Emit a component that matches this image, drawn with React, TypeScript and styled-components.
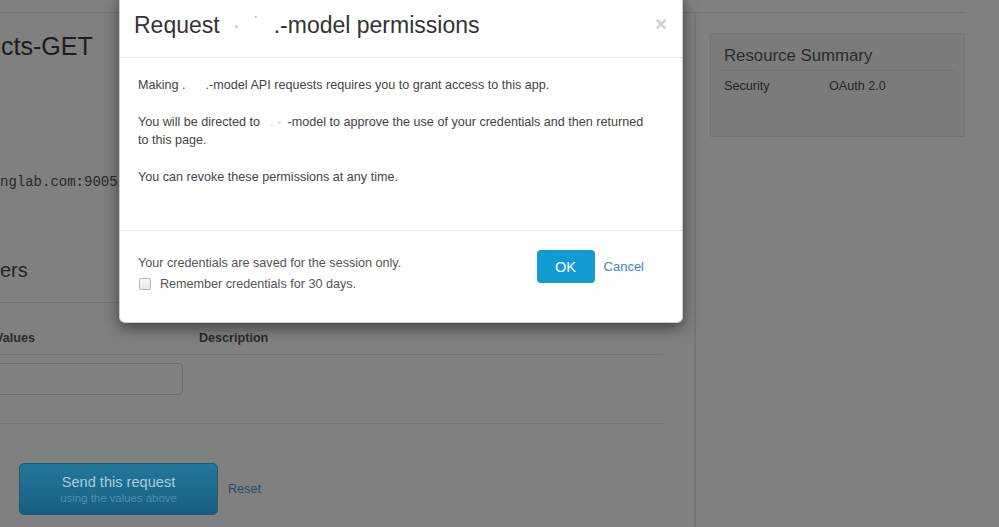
import React from "react";
import styled, { createGlobalStyle } from "styled-components";

const GlobalStyle = createGlobalStyle`
  html, body { margin: 0; padding: 0; }
  body {
    width: 999px;
    height: 527px;
    overflow: hidden;
    background: #808080;
    font-family: "Liberation Sans", Arial, sans-serif;
  }
  * { box-sizing: border-box; }
`;

const Page = styled.div`
  position: relative;
  width: 999px;
  height: 527px;
  overflow: hidden;
  background: #808080;
`;

const Layout = styled.div`
  width: 965px;
  height: 100%;
  display: flex;
  flex-direction: column;
`;

const TopBar = styled.div`
  flex: none;
  height: 13px;
  border-bottom: 1px solid #727272;
`;

const Columns = styled.div`
  flex: 1;
  display: grid;
  grid-template-columns: 696px 1fr;
`;

const Main = styled.main`
  border-right: 2px solid #767676;
  padding-right: 31px;
  display: flex;
  flex-direction: column;
`;

const PageTitle = styled.h1`
  margin: 18px 0 0 1px;
  font-size: 25px;
  line-height: 30px;
  font-weight: normal;
  color: #1c1c1c;
`;

const Url = styled.div`
  margin-top: 111px;
  font-family: "Liberation Mono", "Courier New", monospace;
  font-size: 14px;
  line-height: 20px;
  color: #2a2a2a;
  white-space: nowrap;
`;

const SectionHeading = styled.h2`
  margin: 66px 0 0;
  font-size: 20px;
  line-height: 24px;
  font-weight: normal;
  color: #262626;
`;

const Table = styled.div`
  margin-top: 20px;
  border-top: 1px solid #747474;
`;

const Row = styled.div<{ $head?: boolean }>`
  display: grid;
  grid-template-columns: 199px 1fr;
  align-items: ${(p) => (p.$head ? "end" : "start")};
  height: ${(p) => (p.$head ? "52px" : "69px")};
  padding: ${(p) => (p.$head ? "0 0 7px" : "8px 0 0")};
  border-bottom: 1px solid #747474;
`;

const HeadCell = styled.div<{ $shift?: number }>`
  margin-left: ${(p) => p.$shift ?? 0}px;
  font-size: 12.6px;
  line-height: 18px;
  font-weight: bold;
  color: #2a2a2a;
`;

const ValueInput = styled.input`
  margin-left: -8px;
  width: 191px;
  height: 32px;
  border: 1px solid #6c6c6c;
  border-radius: 4px;
  background: #808080;
  outline: none;
`;

const Actions = styled.div`
  margin: 39px 0 0 19px;
  display: flex;
  align-items: center;
  gap: 10px;
`;

const SendButton = styled.button`
  width: 199px;
  height: 52px;
  border: 1px solid #1b5c78;
  border-radius: 5px;
  background: linear-gradient(#23789c, #175e7e);
  display: flex;
  flex-direction: column;
  align-items: center;
  justify-content: center;
  padding: 0;
  font-family: "Liberation Sans", Arial, sans-serif;
  cursor: pointer;
`;

const SendLabel = styled.span`
  font-size: 14.6px;
  line-height: 17px;
  color: #a9cbdb;
`;

const SendSub = styled.span`
  font-size: 11.4px;
  line-height: 14px;
  color: #4d90b0;
`;

const ResetLink = styled.a`
  font-size: 12.6px;
  color: #244c68;
  text-decoration: none;
`;

const Sidebar = styled.aside`
  padding: 20px 0 0 14px;
`;

const SummaryBox = styled.section`
  width: 255px;
  height: 104px;
  border: 1px solid #737373;
  border-radius: 2px;
  background: #7b7b7b;
  padding: 10px 9px 0;
`;

const SummaryTitle = styled.h3`
  margin: 0;
  padding: 0 4px 2px;
  font-size: 16.8px;
  line-height: 24px;
  font-weight: normal;
  color: #2c2c2c;
  border-bottom: 1px solid #737373;
`;

const SummaryRow = styled.div`
  margin-top: 6px;
  padding: 0 4px;
  display: grid;
  grid-template-columns: 105px 1fr;
  font-size: 12.6px;
  line-height: 18px;
  color: #262626;
`;

/* ---------- modal ---------- */

const Modal = styled.div`
  position: absolute;
  left: 119px;
  top: -6px;
  width: 564px;
  background: #fff;
  border: 1px solid rgba(0, 0, 0, 0.2);
  border-radius: 6px;
  box-shadow: 0 5px 15px rgba(0, 0, 0, 0.5);
`;

const ModalHeader = styled.div`
  display: flex;
  align-items: center;
  justify-content: space-between;
  padding: 16px 15px 18px 14px;
  border-bottom: 1px solid #e5e5e5;
`;

const ModalTitle = styled.h4`
  margin: 0;
  font-size: 23px;
  line-height: 28px;
  font-weight: normal;
  color: #333;
  white-space: nowrap;
`;

const Redacted = styled.span<{ $w: number }>`
  display: inline-block;
  width: ${(p) => p.$w}px;
  text-align: center;
  color: #c9c9c9;
  white-space: pre;
`;

const CloseButton = styled.button`
  border: 0;
  background: none;
  padding: 0;
  margin-top: -2px;
  font-family: "Liberation Sans", Arial, sans-serif;
  font-size: 20px;
  font-weight: bold;
  line-height: 1;
  color: #000;
  opacity: 0.2;
  cursor: pointer;
`;

const ModalBody = styled.div`
  padding: 18px 32px 44px 18px;
  font-size: 12.6px;
  line-height: 18px;
  color: #444;
`;

const Para = styled.p`
  margin: 0 0 19px;
  &:last-child {
    margin-bottom: 0;
  }
`;

const ModalFooter = styled.div`
  display: flex;
  justify-content: space-between;
  align-items: flex-start;
  padding: 19px 38px 29px 18px;
  border-top: 1px solid #e5e5e5;
`;

const FooterNote = styled.div`
  margin-top: 4px;
  font-size: 12.6px;
  line-height: 18px;
  color: #555;
`;

const CheckRow = styled.label`
  margin-top: 3px;
  display: flex;
  align-items: center;
  gap: 9px;
`;

const CheckBox = styled.input`
  appearance: none;
  margin: 0 0 0 1px;
  width: 12px;
  height: 12px;
  border: 1px solid #b5b5b5;
  border-radius: 2px;
  background: linear-gradient(#fafafa, #e6e6e6);
`;

const FooterActions = styled.div`
  display: flex;
  align-items: center;
  gap: 9px;
`;

const OkButton = styled.button`
  width: 58px;
  height: 33px;
  border: 0;
  border-radius: 4px;
  background: #129bd3;
  color: #fff;
  font-family: "Liberation Sans", Arial, sans-serif;
  font-size: 14.6px;
  cursor: pointer;
`;

const CancelLink = styled.a`
  font-size: 13px;
  line-height: 30px;
  color: #3f86b3;
  text-decoration: none;
`;

export default function App() {
  return (
    <Page>
      <GlobalStyle />
      <Layout>
        <TopBar />
        <Columns>
          <Main>
            <PageTitle>cts-GET</PageTitle>
            <Url>nglab.com:9005/</Url>
            <SectionHeading>ers</SectionHeading>
            <Table>
              <Row $head>
                <HeadCell $shift={-5}>Values</HeadCell>
                <HeadCell>Description</HeadCell>
              </Row>
              <Row>
                <ValueInput type="text" aria-label="value" />
                <div />
              </Row>
            </Table>
            <Actions>
              <SendButton>
                <SendLabel>Send this request</SendLabel>
                <SendSub>using the values above</SendSub>
              </SendButton>
              <ResetLink href="#">Reset</ResetLink>
            </Actions>
          </Main>
          <Sidebar>
            <SummaryBox>
              <SummaryTitle>Resource Summary</SummaryTitle>
              <SummaryRow>
                <span>Security</span>
                <span>OAuth 2.0</span>
              </SummaryRow>
            </SummaryBox>
          </Sidebar>
        </Columns>
      </Layout>

      <Modal role="dialog">
        <ModalHeader>
          <ModalTitle>
            Request<Redacted $w={54}>{"  ·  ˙  "}</Redacted>.-model permissions
          </ModalTitle>
          <CloseButton aria-label="close">×</CloseButton>
        </ModalHeader>
        <ModalBody>
          <Para>
            Making .<Redacted $w={20}> </Redacted>.-model API requests requires you to grant access to this app.
          </Para>
          <Para>
            You will be directed to <Redacted $w={24}>{". -"}</Redacted>-model to approve the use of your credentials and then returned to this page.
          </Para>
          <Para>You can revoke these permissions at any time.</Para>
        </ModalBody>
        <ModalFooter>
          <FooterNote>
            <div>Your credentials are saved for the session only.</div>
            <CheckRow>
              <CheckBox type="checkbox" />
              <span>Remember credentials for 30 days.</span>
            </CheckRow>
          </FooterNote>
          <FooterActions>
            <OkButton>OK</OkButton>
            <CancelLink href="#">Cancel</CancelLink>
          </FooterActions>
        </ModalFooter>
      </Modal>
    </Page>
  );
}
